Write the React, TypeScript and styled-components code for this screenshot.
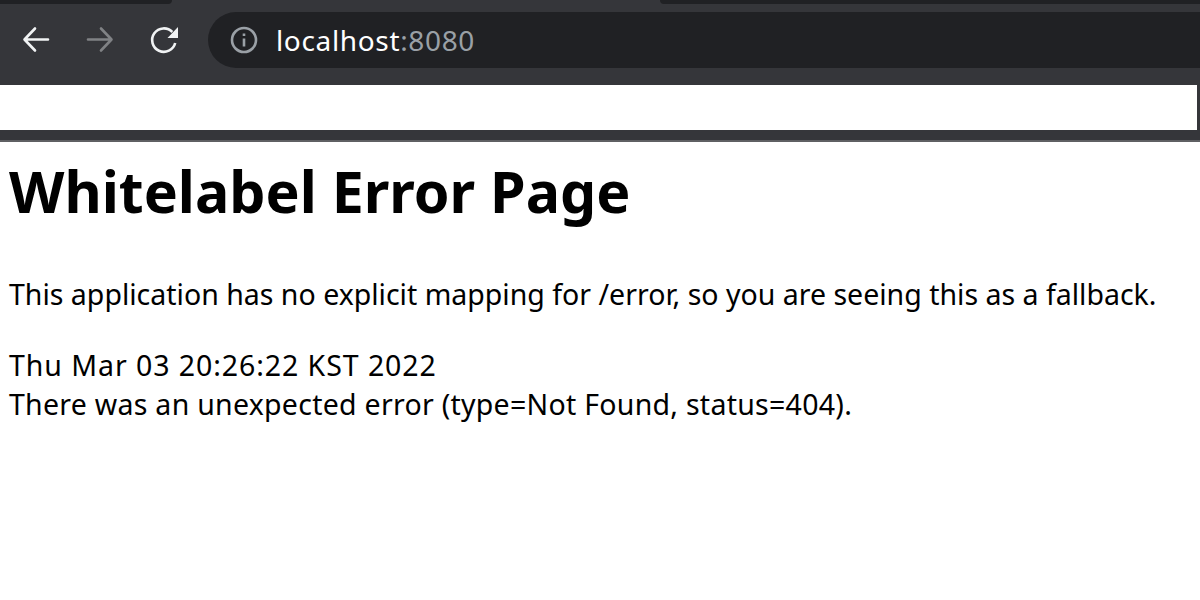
import styled, { createGlobalStyle } from 'styled-components';

const GlobalStyle = createGlobalStyle`
    html, body {
        margin: 0;
        padding: 0;
        background: #ffffff;
    }
`;

const BrowserChrome = styled.div`
    background-color: #35363a;
    height: 140px;
    display: flex;
    flex-direction: column;
`;

const TabStrip = styled.div`
    height: 4px;
    display: flex;
    justify-content: space-between;
`;

const Tab = styled.div<{ $width: number; $side: 'left' | 'right' }>`
    width: ${(p) => p.$width}px;
    background-color: #202124;
    border-radius: ${(p) => (p.$side === 'left' ? '0 0 10px 0' : '0 0 0 10px')};
`;

const Toolbar = styled.div`
    height: 81px;
    display: flex;
    align-items: flex-start;
    padding: 8px 0 0 4px;
    box-sizing: border-box;
`;

const NavButton = styled.button`
    width: 64px;
    height: 56px;
    padding: 0;
    border: 0;
    background: none;
    display: flex;
    align-items: center;
    justify-content: center;
`;

const AddressBar = styled.div`
    flex: 1;
    height: 56px;
    margin-left: 12px;
    padding-left: 22px;
    display: flex;
    align-items: center;
    gap: 18px;
    background-color: #202124;
    border-radius: 28px 0 0 28px;
`;

const Url = styled.span`
    font-family: 'Noto Sans', sans-serif;
    font-size: 28px;
    letter-spacing: 0.65px;
    color: #ffffff;
`;

const Port = styled.span`
    color: #9aa0a6;
`;

const BookmarkBar = styled.div`
    height: 45px;
    margin-right: 3px;
    background-color: #ffffff;
`;

const Page = styled.main`
    border-top: 2px solid #5f6063;
    padding: 12px 8px 0 9px;
    font-family: 'Noto Sans', sans-serif;
    color: #000000;
`;

const Title = styled.h1`
    margin: 0 0 47px;
    font-size: 57.3px;
    line-height: 74px;
    font-weight: 700;
`;

const Paragraph = styled.p`
    margin: 0 0 32px;
    font-size: 28.5px;
    line-height: 39px;
    white-space: nowrap;
`;

const Line = styled.div<{ $tracking: number }>`
    font-size: 28.5px;
    line-height: 39px;
    letter-spacing: ${(p) => p.$tracking}px;
`;

export default function App() {
    return (
        <>
            <GlobalStyle />
            <BrowserChrome>
                <TabStrip>
                    <Tab $width={172} $side="left" />
                    <Tab $width={540} $side="right" />
                </TabStrip>
                <Toolbar>
                    <NavButton aria-label="Back">
                        <svg width="32" height="32" viewBox="0 0 32 32" fill="none" stroke="#f1f3f4" strokeWidth="2.600" strokeLinecap="round" strokeLinejoin="round">
                            <path d="M28 15.500H5M15 4.500 4.500 15.500l10.500 11" />
                        </svg>
                    </NavButton>
                    <NavButton aria-label="Forward">
                        <svg width="32" height="32" viewBox="0 0 32 32" fill="none" stroke="#808285" strokeWidth="2.600" strokeLinecap="round" strokeLinejoin="round">
                            <path d="M4 15.500h23M17 4.500l10.500 11L17 26.500" />
                        </svg>
                    </NavButton>
                    <NavButton aria-label="Reload">
                        <svg width="32" height="32" viewBox="0 0 32 32" fill="none">
                            <path d="M24.300 8A11.700 11.700 0 1 0 27.200 19" stroke="#f1f3f4" strokeWidth="2.600" />
                            <path d="M30 3v11H19.500z" fill="#f1f3f4" />
                        </svg>
                    </NavButton>
                    <AddressBar>
                        <svg width="28" height="28" viewBox="0 0 28 28" fill="none">
                            <circle cx="14" cy="14" r="12" stroke="#9aa0a6" strokeWidth="2.600" />
                            <path d="M12.700 12.500h2.600v8h-2.600zM12.700 7.500h2.600v2.600h-2.600z" fill="#9aa0a6" />
                        </svg>
                        <Url>
                            localhost<Port>:8080</Port>
                        </Url>
                    </AddressBar>
                </Toolbar>
                <BookmarkBar />
            </BrowserChrome>
            <Page>
                <Title>Whitelabel Error Page</Title>
                <Paragraph>This application has no explicit mapping for /error, so you are seeing this as a fallback.</Paragraph>
                <Line $tracking={0.93}>Thu Mar 03 20:26:22 KST 2022</Line>
                <Line $tracking={0.27}>There was an unexpected error (type=Not Found, status=404).</Line>
            </Page>
        </>
    );
}
